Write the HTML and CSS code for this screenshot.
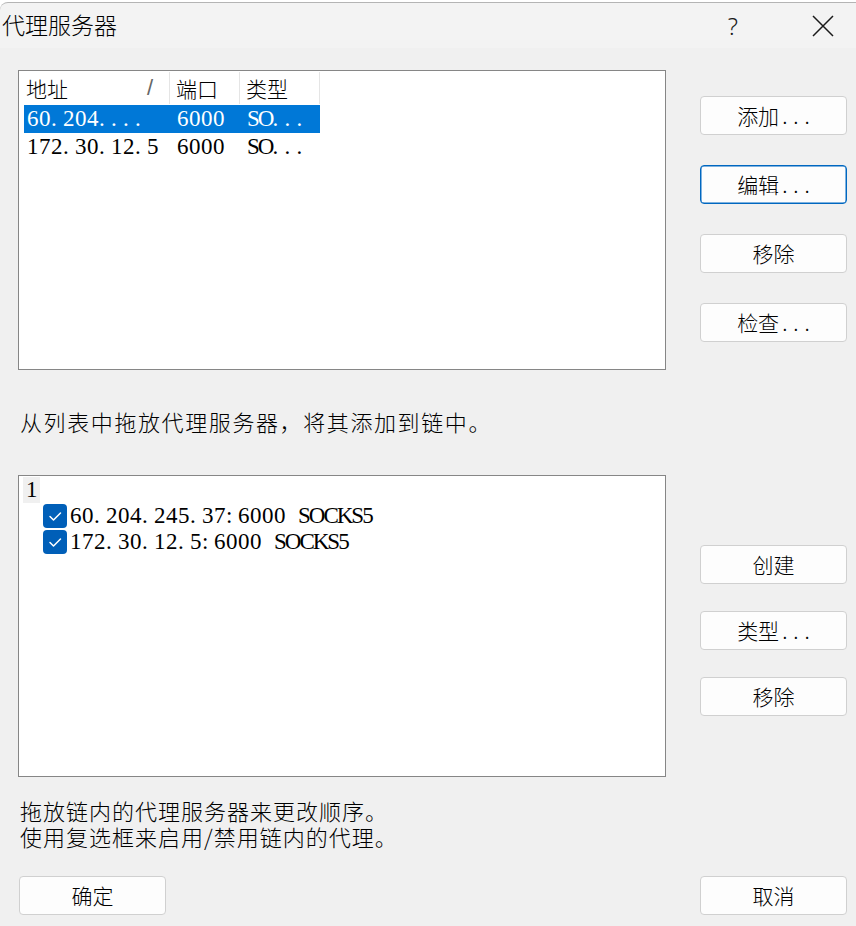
FILE: index.html
```html
<!DOCTYPE html>
<html lang="zh-CN">
<head>
<meta charset="utf-8">
<title>代理服务器</title>
<link rel="stylesheet" href="styles.css">
</head>
<body>
<div class="window">
  <div class="titlebar">
    <span class="title">代理服务器</span>
    <div class="tb-controls">
      <span class="help">?</span>
      <svg class="close" width="22" height="22" viewBox="0 0 22 22"><path d="M1 1 L21 21 M21 1 L1 21" stroke="#1a1a1a" stroke-width="1.5" fill="none"/></svg>
    </div>
  </div>
  <div class="body">
    <div class="section section-top">
      <div class="listbox">
        <div class="lv-header">
          <div class="hcell c1"><span>地址</span><span class="sort">/</span></div>
          <div class="hcell c2">端口</div>
          <div class="hcell c3">类型</div>
        </div>
        <div class="lv-row selected">
          <div class="cell c1 first">60<span class="p">.</span>204<span class="p">.</span><span class="p">.</span><span class="p">.</span><span class="p">.</span></div>
          <div class="cell c2">6000</div>
          <div class="cell c3"><span class="alpha">SO</span><span class="p">.</span><span class="p">.</span><span class="p">.</span></div>
        </div>
        <div class="lv-row">
          <div class="cell c1 first">172<span class="p">.</span>30<span class="p">.</span>12<span class="p">.</span>5</div>
          <div class="cell c2">6000</div>
          <div class="cell c3"><span class="alpha">SO</span><span class="p">.</span><span class="p">.</span><span class="p">.</span></div>
        </div>
      </div>
      <div class="btncol btncol-top">
        <button class="btn">添加<span class="dots">...</span></button>
        <button class="btn focused">编辑<span class="dots">...</span></button>
        <button class="btn">移除</button>
        <button class="btn">检查<span class="dots">...</span></button>
      </div>
    </div>
    <p class="hint hint-top">从列表中拖放代理服务器，将其添加到链中。</p>
    <div class="section section-chain">
      <div class="treebox">
        <div class="chain-root"><span class="root-label">1</span></div>
        <div class="chain-item">
          <span class="check"><svg width="24" height="24" viewBox="0 0 24 24"><path d="M7 12.5 L10.5 16 L17.5 9" stroke="#fff" stroke-width="1.5" fill="none" stroke-linecap="round" stroke-linejoin="round"/></svg></span>
          <span class="item-text">60<span class="p">.</span>204<span class="p">.</span>245<span class="p">.</span>37<span class="p">:</span>6000<span class="sp"> </span><span class="alpha">SOCKS5</span></span>
        </div>
        <div class="chain-item">
          <span class="check"><svg width="24" height="24" viewBox="0 0 24 24"><path d="M7 12.5 L10.5 16 L17.5 9" stroke="#fff" stroke-width="1.5" fill="none" stroke-linecap="round" stroke-linejoin="round"/></svg></span>
          <span class="item-text">172<span class="p">.</span>30<span class="p">.</span>12<span class="p">.</span>5<span class="p">:</span>6000<span class="sp"> </span><span class="alpha">SOCKS5</span></span>
        </div>
      </div>
      <div class="btncol btncol-chain">
        <button class="btn">创建</button>
        <button class="btn">类型<span class="dots">...</span></button>
        <button class="btn">移除</button>
      </div>
    </div>
    <p class="hint hint-bottom">拖放链内的代理服务器来更改顺序。<br>使用复选框来启用/禁用链内的代理。</p>
    <div class="footer">
      <button class="btn ok">确定</button>
      <button class="btn">取消</button>
    </div>
  </div>
</div>
</body>
</html>
```

FILE: styles.css
```css
html, body {
  margin: 0;
  padding: 0;
  background: #ffffff;
}

.window {
  width: 856px;
  height: 926px;
  padding-top: 2px;
  box-sizing: border-box;
  background: #ffffff;
  font-family: "Noto Sans CJK SC", "Noto Sans", sans-serif;
  font-weight: 300;
  color: #000;
  overflow: hidden;
}

.titlebar {
  height: 46px;
  background: #f3f3f3;
  border-top: 1px solid #b4b4b4;
  border-top-left-radius: 8px;
  display: flex;
  align-items: center;
  justify-content: space-between;
  box-sizing: border-box;
}

.title {
  font-size: 23px;
  padding-left: 2px;
  line-height: 1;
  margin-top: -2px;
}

.tb-controls {
  display: flex;
  align-items: center;
  gap: 74px;
  padding-right: 22px;
}

.help {
  font-family: "Noto Sans", sans-serif;
  font-weight: 300;
  font-size: 24px;
  line-height: 1;
  color: #1a1a1a;
}

.close {
  display: block;
}

.body {
  background: #f0f0f0;
  height: 878px;
  padding: 22px 9px 0 18px;
  box-sizing: border-box;
}

.section {
  display: grid;
  grid-template-columns: 648px 147px;
  column-gap: 34px;
}

.listbox {
  height: 300px;
  box-sizing: border-box;
  border: 1px solid #868686;
  background: #fff;
  padding: 1px 0 0 5px;
}

.lv-header {
  display: flex;
  height: 32px;
  margin-left: -4px;
  padding-left: 4px;
  margin-bottom: 1px;
}

.hcell {
  font-size: 21px;
  line-height: 32px;
  box-sizing: border-box;
  border-right: 1px solid #e5e5e5;
  color: #000;
}

.hcell.c1 {
  width: 146px;
  padding-left: 2px;
  display: flex;
  justify-content: space-between;
  padding-right: 16px;
}

.sort {
  font-family: "Liberation Sans", sans-serif;
  font-weight: 400;
  font-size: 22px;
  color: #666;
}

.hcell.c2 {
  width: 70px;
  padding-left: 6px;
}

.hcell.c3 {
  width: 80px;
  padding-left: 6px;
}

.lv-row {
  display: flex;
  height: 28px;
  width: 296px;
  font-family: "Liberation Serif", serif;
  font-weight: 400;
  font-size: 23px;
  letter-spacing: 0.5px;
  line-height: 28px;
}

.lv-row.selected {
  background: #0078d7;
  color: #fff;
}

.cell {
  box-sizing: border-box;
  white-space: nowrap;
}

.p {
  display: inline-block;
  width: 12px;
  text-align: left;
  letter-spacing: 0;
}

.sp {
  display: inline-block;
  width: 12px;
}

.alpha {
  letter-spacing: -2px;
}

.cell.c1 {
  width: 146px;
  padding-left: 3px;
}

.cell.c2 {
  width: 70px;
  padding-left: 7px;
}

.cell.c3 {
  width: 80px;
  padding-left: 7px;
}

.btncol {
  display: flex;
  flex-direction: column;
}

.btncol-top {
  padding-top: 26px;
  gap: 30px;
}

.btncol-chain {
  padding-top: 70px;
  gap: 27px;
}

.btn {
  width: 147px;
  height: 39px;
  box-sizing: border-box;
  background: #fdfdfd;
  border: 1px solid #d0d0d0;
  border-radius: 4px;
  font-family: "Noto Sans CJK SC", "Noto Sans", sans-serif;
  font-weight: 300;
  font-size: 21px;
  color: #000;
  padding: 0;
  line-height: 1;
}

.dots {
  letter-spacing: 6px;
  margin-right: -6px;
  padding-left: 3px;
}

.btn.focused {
  border: 1px solid #0067c0;
  box-shadow: inset 0 0 0 0.5px #0067c0;
}

.hint {
  margin: 0;
  padding-left: 2px;
  font-size: 22px;
  letter-spacing: 1px;
  color: #000;
}

.hint-top {
  margin-top: 36px;
  line-height: 30px;
  margin-bottom: 39px;
  letter-spacing: 1.6px;
}

.treebox {
  height: 302px;
  box-sizing: border-box;
  border: 1px solid #868686;
  background: #fff;
  padding: 1px 0 0 4px;
  font-family: "Liberation Serif", serif;
  font-weight: 400;
  font-size: 23px;
  letter-spacing: 0.5px;
}

.chain-root {
  height: 26px;
  display: flex;
}

.root-label {
  background: #f0f0f0;
  width: 17px;
  padding-left: 3px;
  box-sizing: border-box;
  line-height: 26px;
}

.chain-item {
  display: flex;
  align-items: center;
  height: 26px;
  padding-left: 20px;
}

.check {
  width: 24px;
  height: 24px;
  border-radius: 4px;
  background: #005fb8;
  margin-right: 3px;
  display: block;
  flex: none;
}

.check svg {
  display: block;
}

.item-text {
  white-space: nowrap;
  line-height: 26px;
}

.hint-bottom {
  margin-top: 20px;
  line-height: 26px;
}

.footer {
  margin-top: 27px;
  display: flex;
  justify-content: space-between;
  padding-left: 1px;
}
```
